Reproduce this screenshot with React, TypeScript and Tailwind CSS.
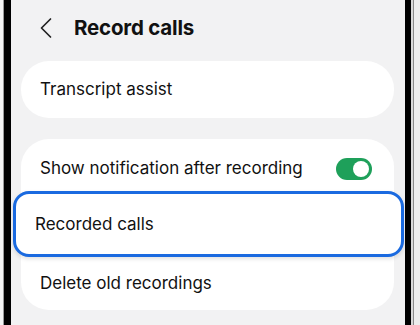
function Toggle({ on }: { on: boolean }) {
  return (
    <div
      className={`w-[36px] h-[22px] rounded-full flex items-center px-[3px] ${
        on ? "bg-[#1ea05a] justify-end" : "bg-[#c4c4c4] justify-start"
      }`}
    >
      <div className="w-[16px] h-[16px] rounded-full bg-white" />
    </div>
  );
}

function BackChevron() {
  return (
    <svg width="14" height="22" viewBox="0 0 14 22" fill="none" className="text-[#222]">
      <path d="M11.5 2 L2.5 11 L11.5 20" stroke="currentColor" strokeWidth="1.7" strokeLinecap="round" strokeLinejoin="round" />
    </svg>
  );
}

export default function App() {
  return (
    <div className="w-[420px] h-[325px] flex overflow-hidden bg-[#e9e9e9] font-['Inter',sans-serif] text-[#111]">
      <div className="w-[3px] bg-[#f4f4f4]" />
      <div className="w-[1px] bg-[#9a9a9a]" />
      <div className="w-[7px] bg-black" />

      <div className="flex-1 bg-[#f2f2f3] flex flex-col">
        <div className="h-[58px] flex items-center pl-[28px] gap-[21px] pb-[2px]">
          <BackChevron />
          <h1 className="text-[20.5px] font-bold tracking-[-0.2px]">Record calls</h1>
        </div>

        <div className="mt-[3px] ml-[10px] mr-[11px] bg-white rounded-[28px] h-[57px] flex items-center px-[19px] pt-[1px]">
          <span className="text-[17px]">Transcript assist</span>
        </div>

        <div className="ml-[10px] mr-[11px] mt-[21px] bg-white rounded-[28px] flex flex-col">
          <div className="h-[52px] flex items-center justify-between pl-[19px] pr-[22px] pt-[8px]">
            <span className="text-[17px]">Show notification after recording</span>
            <Toggle on />
          </div>
          <div className="-ml-[8px] -mr-[10px] h-[66px] flex items-center pl-[19px] pt-[2px] rounded-[16px] border-[3.5px] border-[#1a6ae0] bg-white shadow-[0_2px_4px_rgba(0,0,0,0.12)]">
            <span className="text-[17px]">Recorded calls</span>
          </div>
          <div className="h-[53px] flex items-center pl-[19px]">
            <span className="text-[17px]">Delete old recordings</span>
          </div>
        </div>
      </div>

      <div className="w-[6px] bg-black" />
      <div className="w-[2px] bg-[#d8d8d8]" />
      <div className="w-[1px] bg-[#8a8a8a]" />
      <div className="w-[6px] bg-[#ececec]" />
    </div>
  );
}
